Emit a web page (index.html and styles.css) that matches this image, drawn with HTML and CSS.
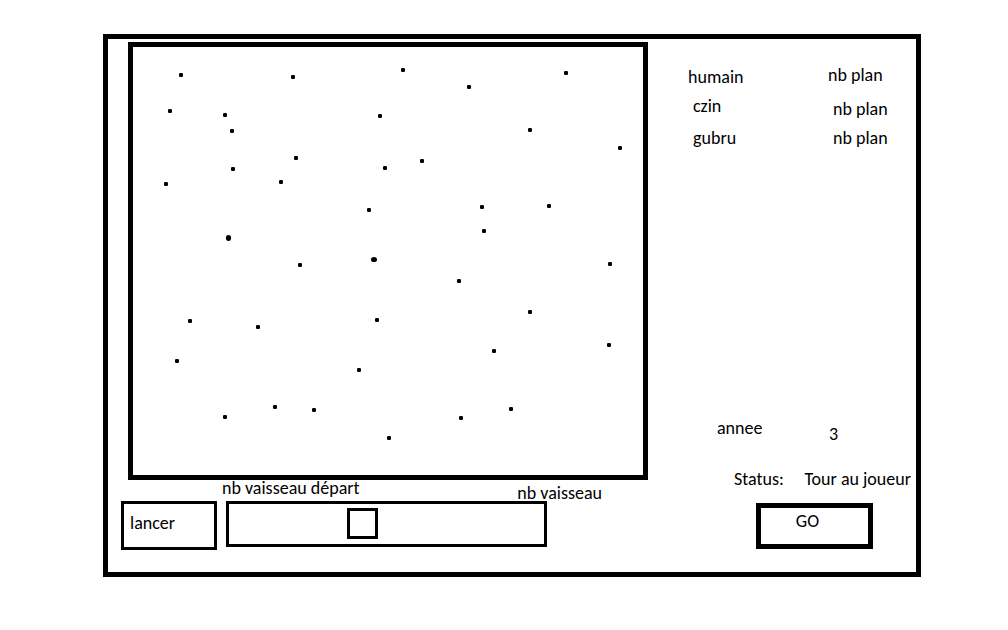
FILE: index.html
```html
<!DOCTYPE html>
<html lang="fr">
<head>
<meta charset="utf-8">
<meta name="viewport" content="width=device-width, initial-scale=1">
<title>Tour au joueur</title>
<link rel="stylesheet" href="styles.css">
</head>
<body>
<main class="game">
  <section class="board">
    <svg class="map" viewBox="133 47 510 428" role="img" aria-label="planètes">
      <defs><rect id="p" x="-2" y="-2" width="4" height="4" rx="1.2"/></defs>
      <g class="planets">
        <use href="#p" x="181" y="75"/><use href="#p" x="293" y="77"/><use href="#p" x="403" y="70"/>
        <use href="#p" x="469" y="87"/><use href="#p" x="566" y="73"/><use href="#p" x="170" y="111"/>
        <use href="#p" x="225" y="115"/><use href="#p" x="232" y="131"/><use href="#p" x="380" y="116"/>
        <use href="#p" x="530" y="130"/><use href="#p" x="620" y="148"/><use href="#p" x="296" y="158"/>
        <use href="#p" x="233" y="169"/><use href="#p" x="281" y="182"/><use href="#p" x="166" y="184"/>
        <use href="#p" x="385" y="168"/><use href="#p" x="422" y="161"/><use href="#p" x="369" y="210"/>
        <use href="#p" x="482" y="207"/><use href="#p" x="549" y="206"/><use href="#p" x="484" y="231"/>
        <use href="#p" x="300" y="265"/><use href="#p" x="459" y="281"/><use href="#p" x="610" y="264"/>
        <use href="#p" x="190" y="321"/><use href="#p" x="258" y="327"/><use href="#p" x="377" y="320"/>
        <use href="#p" x="530" y="312"/><use href="#p" x="494" y="351"/><use href="#p" x="609" y="345"/>
        <use href="#p" x="177" y="361"/><use href="#p" x="359" y="370"/><use href="#p" x="225" y="417"/>
        <use href="#p" x="275" y="407"/><use href="#p" x="314" y="410"/><use href="#p" x="389" y="438"/>
        <use href="#p" x="461" y="418"/><use href="#p" x="511" y="409"/>
        <ellipse cx="228.5" cy="238" rx="2.6" ry="3"/><ellipse cx="374" cy="259.5" rx="3" ry="2.6"/>
      </g>
    </svg>
    <form class="controls">
      <button class="launch" type="button">lancer</button>
      <div class="fleet">
        <div class="captions">
          <label for="ships">nb vaisseau départ</label>
          <output class="total" for="ships">nb vaisseau</output>
        </div>
        <input class="slider" id="ships" type="range" min="0" max="284" value="118">
      </div>
    </form>
  </section>
  <aside class="side">
    <table class="players">
      <tr class="lead"><th scope="row">humain</th><td>nb plan</td></tr>
      <tr class="second"><th scope="row">czin</th><td>nb plan</td></tr>
      <tr><th scope="row">gubru</th><td>nb plan</td></tr>
    </table>
    <div class="turn">
      <dl class="year"><dt>annee</dt><dd>3</dd></dl>
      <dl class="status"><dt>Status:</dt><dd>Tour au joueur</dd></dl>
      <button class="go" type="button">GO</button>
    </div>
  </aside>
</main>
</body>
</html>
```
FILE: styles.css
```css
* { box-sizing: border-box; }

body {
  display: flex;
  min-height: 100vh;
  margin: 0;
  padding: 34px 87px 53px 103px;
  background: #fff;
  color: #000;
  font: 18px/22px Carlito, Lato, sans-serif;
}

button {
  background: #fff;
  color: inherit;
  font: inherit;
}

dl, dd { margin: 0; }

.game {
  flex: 1;
  display: grid;
  grid-template-columns: 1fr 268px;
  border: 5px solid #000;
}

.board {
  display: flex;
  flex-direction: column;
  padding: 3px 0 22px 13px;
}

.map {
  display: block;
  margin-left: 7px;
  border: 5px solid #000;
}

.controls {
  display: flex;
  align-items: flex-end;
  gap: 5px;
}

.launch {
  width: 96px;
  height: 49px;
  padding: 0 6px 6px;
  border: 3px solid #000;
  text-align: left;
}

.fleet {
  width: 380px;
  height: 70px;
}

.captions {
  display: flex;
  justify-content: space-between;
  height: 21px;
  line-height: 16px;
}

.total { align-self: flex-end; }

.slider {
  appearance: none;
  display: block;
  width: 321px;
  height: 46px;
  margin: 0 0 0 4px;
  padding-bottom: 1px;
  border: 3px solid #000;
  background: #fff;
}

.slider::-webkit-slider-thumb {
  appearance: none;
  box-sizing: border-box;
  width: 31px;
  height: 31px;
  border: 3px solid #000;
  background: #fff;
}

.slider::-moz-range-thumb {
  box-sizing: border-box;
  width: 31px;
  height: 31px;
  border: 3px solid #000;
  border-radius: 0;
  background: #fff;
}

.side {
  display: flex;
  flex-direction: column;
  justify-content: space-between;
  padding: 18px 5px 23px 40px;
}

.players {
  width: 204px;
  border-spacing: 0 7px;
}

.players th,
.players td {
  padding: 0 0 0 5px;
  font-weight: normal;
  text-align: left;
}

.players th { width: 140px; }

.players .lead th,
.players .lead td { padding-left: 0; }

.lead { height: 24px; }
.lead th { vertical-align: bottom; }
.lead td { vertical-align: top; }

.second { height: 25px; }
.second th { vertical-align: top; }
.second td { vertical-align: bottom; }

.turn {
  display: flex;
  flex-direction: column;
}

.year {
  display: grid;
  grid-template-columns: 112px 1fr;
  height: 28px;
  margin: 0 0 23px 29px;
}

.year dd { align-self: end; }

.status {
  display: flex;
  justify-content: space-between;
  margin: 0 0 13px 46px;
  white-space: nowrap;
}

.go {
  width: 117px;
  height: 46px;
  margin-left: 68px;
  padding: 0 14px 10px 0;
  border: 5px solid #000;
}
```
